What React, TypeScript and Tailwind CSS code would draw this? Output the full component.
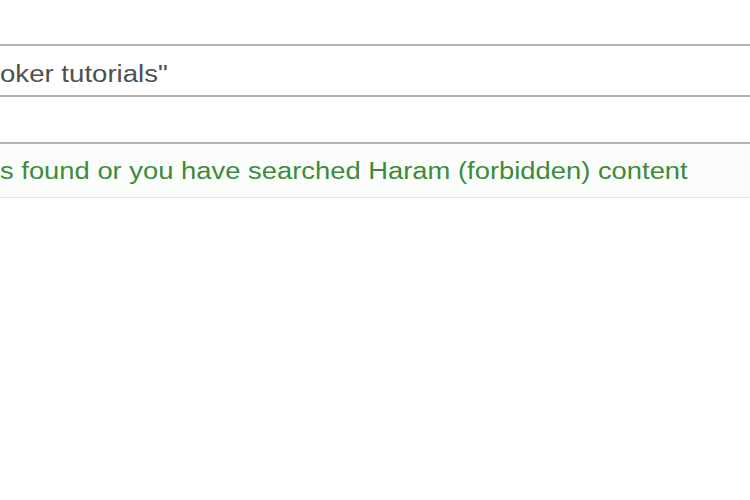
import React from "react";

export default function App() {
  return (
    <div className="w-[750px] h-[500px] bg-white overflow-hidden pt-[44px]" style={{ fontFamily: '"Liberation Sans", Arial, sans-serif' }}>
      <div className="h-[51px] border-t-2 border-[#b3b3b3] pt-[15px] box-border">
        <span className="inline-block origin-left scale-x-[1.2] text-[23px] leading-[26px] text-[#505050] whitespace-nowrap">
          oker tutorials"
        </span>
      </div>
      <div className="h-[47px] border-t-2 border-[#b3b3b3] box-border" />
      <div className="h-[56px] border-t-2 border-b border-t-[#b3b3b3] border-b-[#e2e2e2] bg-[#fbfdfb] pt-[14px] box-border">
        <span className="inline-block origin-left scale-x-[1.19] text-[23px] leading-[26px] text-[#3e8a3c] whitespace-nowrap">
          s found or you have searched Haram (forbidden) content
        </span>
      </div>
    </div>
  );
}
